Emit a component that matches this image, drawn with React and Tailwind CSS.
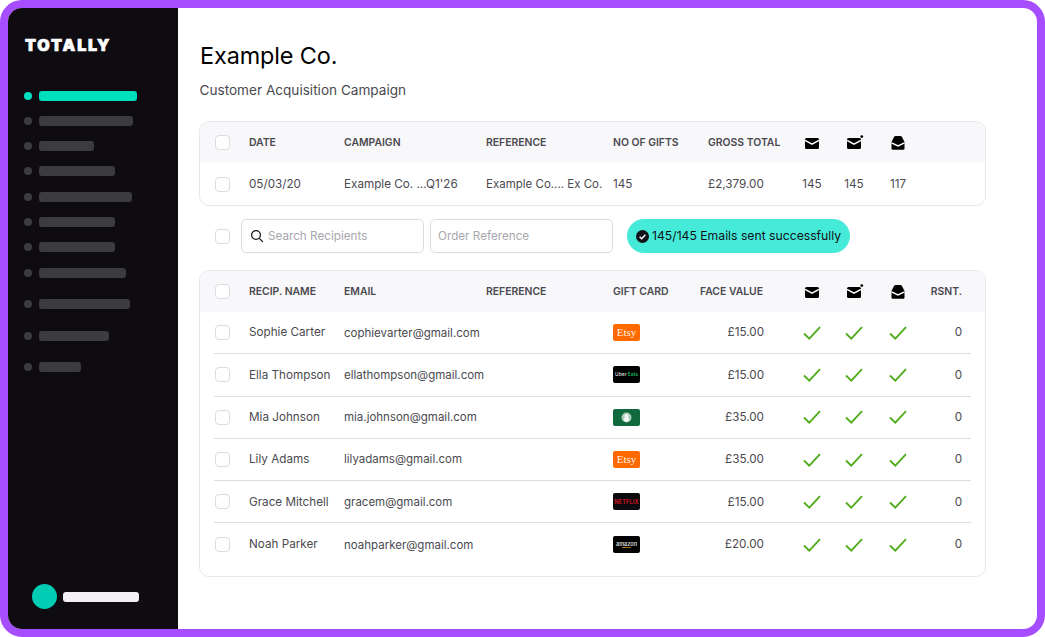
import React from "react";

const navBars = [
  { width: "w-[94px]", top: "mt-[15px]" },
  { width: "w-[55px]", top: "mt-[15px]" },
  { width: "w-[76px]", top: "mt-[15px]" },
  { width: "w-[93px]", top: "mt-[16px]" },
  { width: "w-[76px]", top: "mt-[15px]" },
  { width: "w-[76px]", top: "mt-[15px]" },
  { width: "w-[87px]", top: "mt-[16px]" },
  { width: "w-[91px]", top: "mt-[21px]" },
  { width: "w-[70px]", top: "mt-[22px]" },
  { width: "w-[42px]", top: "mt-[21px]" },
];

const recipients = [
  { name: "Sophie Carter", email: "cophievarter@gmail.com", card: "etsy", value: "£15.00" },
  { name: "Ella Thompson", email: "ellathompson@gmail.com", card: "uber", value: "£15.00" },
  { name: "Mia Johnson", email: "mia.johnson@gmail.com", card: "starbucks", value: "£35.00" },
  { name: "Lily Adams", email: "lilyadams@gmail.com", card: "etsy", value: "£35.00" },
  { name: "Grace Mitchell", email: "gracem@gmail.com", card: "netflix", value: "£15.00" },
  { name: "Noah Parker", email: "noahparker@gmail.com", card: "amazon", value: "£20.00" },
];

const topGrid = "grid grid-cols-[35px_95px_142px_127px_95px_83px_42px_42px_46px] items-center";
const bottomGrid = "grid grid-cols-[35px_95px_142px_127px_87px_64px_27px_42px_42px_46px_41px] items-center";
const headText = "text-[10.4px] font-semibold text-[#4a4a50] whitespace-nowrap";
const bodyText = "pt-[1px] text-[11.7px] text-[#4a4a50] whitespace-nowrap";
const emailText = "pt-[1px] text-[11.5px] text-[#4a4a50] whitespace-nowrap";

const Checkbox = () => (
  <div className="ml-[1px] h-[15px] w-[15px] rounded-[4px] border border-[#dcdbe0] bg-white" />
);

const MailIcon = ({ dot }) => (
  <svg width="16" height="14" viewBox="0 0 16 14" className="mx-auto block overflow-visible">
    <rect x="1" y="2" width="14" height="11" rx="1.5" fill="#000" />
    <path d="M1 4.4 L8 8.2 L15 4.4" fill="none" stroke="#fff" strokeWidth="1.5" />
    {dot && <circle cx="15.8" cy="0.6" r="1.4" fill="#000" />}
  </svg>
);

const OpenMailIcon = () => (
  <svg width="16" height="14" viewBox="0 0 16 14" className="mx-auto block overflow-visible">
    <path d="M1.5 6 L4 1 Q4.5 0 5.5 0 L10.5 0 Q11.5 0 12 1 L14.5 6 L14.5 12.5 Q14.5 13.7 13.3 13.7 L2.7 13.7 Q1.5 13.7 1.5 12.5 Z" fill="#000" />
    <path d="M1.5 6.8 L8 10 L14.5 6.8" fill="none" stroke="#fff" strokeWidth="1.5" />
  </svg>
);

const Tick = () => (
  <svg width="18" height="14" viewBox="0 0 18 14" className="mx-auto block">
    <path d="M1 7.5 L6.3 12.6 L17 1.2" fill="none" stroke="#52ad1e" strokeWidth="1.9" />
  </svg>
);

const GiftCard = ({ type }) => {
  if (type === "etsy") {
    return (
      <div className="flex h-[17px] w-[27px] items-center justify-center rounded-[2px] bg-[#ff6a00] font-['Liberation_Serif',serif] text-[11px] text-[#fff1e6]">
        Etsy
      </div>
    );
  }
  if (type === "uber") {
    return (
      <div className="flex h-[17px] w-[27px] items-center justify-center gap-[1px] rounded-[2px] bg-black text-[5px] font-medium">
        <span className="text-[#ddd]">Uber</span>
        <span className="text-[#06c167]">Eats</span>
      </div>
    );
  }
  if (type === "starbucks") {
    return (
      <div className="flex h-[17px] w-[27px] items-center justify-center rounded-[2px] bg-[#116a3e]">
        <svg width="11" height="11" viewBox="0 0 11 11">
          <circle cx="5.5" cy="5.5" r="5" fill="#a9cdb9" />
          <circle cx="5.5" cy="4" r="2" fill="#f4f8f5" />
          <path d="M2.5 8.5 L4 5 L7 5 L8.5 8.5 L5.5 10 Z" fill="#f4f8f5" />
        </svg>
      </div>
    );
  }
  if (type === "netflix") {
    return (
      <div className="flex h-[17px] w-[27px] items-center justify-center rounded-[2px] bg-[#0c0a0e] text-[5.5px] font-bold tracking-[0.2px] text-[#c8141e]">
        NETFLIX
      </div>
    );
  }
  return (
    <div className="flex h-[17px] w-[27px] flex-col items-center justify-center rounded-[2px] bg-black text-[5.5px] font-semibold leading-[5px] text-[#ddd]">
      amazon
      <div className="h-[1px] w-[9px] rounded-full bg-[#a9701c]" />
    </div>
  );
};

const Sidebar = () => (
  <div className="flex w-[170px] shrink-0 flex-col bg-[#0e0c11] pl-[16px]">
    <div className="ml-[1px] mt-[28px] h-[18px] font-['Inter',sans-serif] text-[16px] font-black leading-[18px] tracking-[1.9px] text-white [-webkit-text-stroke:0.7px_#fff]">
      TOTALLY
    </div>
    <div className="mt-[37px] flex items-center gap-[7px]">
      <div className="h-[8px] w-[8px] rounded-full bg-[#00e0c0]" />
      <div className="h-[10px] w-[98px] rounded-[3px] bg-[#00e0c0]" />
    </div>
    {navBars.map((bar, i) => (
      <div key={i} className={`flex items-center gap-[7px] ${bar.top}`}>
        <div className="h-[8px] w-[8px] rounded-full bg-[#3c3b40]" />
        <div className={`h-[10px] rounded-[3px] bg-[#3c3b40] ${bar.width}`} />
      </div>
    ))}
    <div className="mt-auto mb-[20px] ml-[8px] flex items-center gap-[6px]">
      <div className="h-[25px] w-[25px] rounded-full bg-[#00cdb4]" />
      <div className="h-[10px] w-[76px] rounded-[3px] bg-[#f3f0f4]" />
    </div>
  </div>
);

const App = () => {
  return (
    <div className="h-[637px] w-[1045px] overflow-hidden bg-white font-['Inter',sans-serif]">
      <div className="flex h-full w-full overflow-hidden rounded-[22px] border-[8px] border-[#a64dff] bg-white">
        <Sidebar />
        <div className="flex-1 pl-[21px] pt-[32px]">
          <h1 className="ml-[1px] h-[32px] text-[23.4px] font-normal leading-[32px] tracking-[-0.1px] text-black">Example Co.</h1>
          <p className="ml-[0.5px] mt-[8px] h-[20px] text-[13.6px] leading-[20px] text-[#4a4a50]">
            Customer Acquisition Campaign
          </p>

          <div className="mt-[21px] w-[787px] overflow-hidden rounded-[10px] border border-[#e8e7ea]">
            <div className={`${topGrid} h-[41px] bg-[#f8f7fa] pl-[14px]`}>
              <Checkbox />
              <div className={headText}>DATE</div>
              <div className={headText}>CAMPAIGN</div>
              <div className={headText}>REFERENCE</div>
              <div className={headText}>NO OF GIFTS</div>
              <div className={headText}>GROSS TOTAL</div>
              <MailIcon />
              <MailIcon dot />
              <OpenMailIcon />
            </div>
            <div className={`${topGrid} h-[42px] pl-[14px]`}>
              <Checkbox />
              <div className={bodyText}>05/03/20</div>
              <div className={bodyText}>Example Co. ...Q1'26</div>
              <div className={emailText}>Example Co.... Ex Co.</div>
              <div className={bodyText}>145</div>
              <div className={bodyText}>£2,379.00</div>
              <div className={`${bodyText} text-center`}>145</div>
              <div className={`${bodyText} text-center`}>145</div>
              <div className={`${bodyText} text-center`}>117</div>
            </div>
          </div>

          <div className="mt-[13px] flex h-[34px] items-center pl-[15px]">
            <Checkbox />
            <div className="ml-[11px] flex h-[34px] w-[183px] items-center gap-[4px] rounded-[5px] border border-[#dcdbe0] pl-[8px] text-[11.7px] text-[#a8a7ad]">
              <svg width="14" height="14" viewBox="0 0 14 14" fill="none" stroke="#111" strokeWidth="1.2">
                <circle cx="6" cy="6" r="4.4" />
                <path d="M9.3 9.3 L12.8 12.8" />
              </svg>
              <span className="pt-[1px]">Search Recipients</span>
            </div>
            <div className="ml-[6px] flex h-[34px] w-[183px] items-center rounded-[5px] border border-[#dcdbe0] pl-[7px] pt-[1px] text-[11.7px] text-[#a8a7ad]">
              Order Reference
            </div>
            <div className="ml-[14px] flex h-[34px] w-[223px] items-center gap-[3px] rounded-full bg-[#45ebd8] pl-[9px] text-[12.2px] text-[#12121a]">
              <svg width="13" height="13" viewBox="0 0 13 13">
                <circle cx="6.5" cy="6.5" r="6.5" fill="#12121a" />
                <path d="M3.6 6.7 L5.7 8.7 L9.4 4.7" fill="none" stroke="#fff" strokeWidth="1.4" />
              </svg>
              <span className="whitespace-nowrap">145/145 Emails sent successfully</span>
            </div>
          </div>

          <div className="mt-[17px] w-[787px] overflow-hidden rounded-[10px] border border-[#e8e7ea] pb-[10px]">
            <div className={`${bottomGrid} h-[41px] bg-[#f8f7fa] pl-[14px]`}>
              <Checkbox />
              <div className={headText}>RECIP. NAME</div>
              <div className={headText}>EMAIL</div>
              <div className={headText}>REFERENCE</div>
              <div className={headText}>GIFT CARD</div>
              <div className={`${headText} pr-[1px] text-right`}>FACE VALUE</div>
              <div />
              <MailIcon />
              <MailIcon dot />
              <OpenMailIcon />
              <div className={`${headText} text-right`}>RSNT.</div>
            </div>
            <div className="px-[14px]">
              {recipients.map((r, i) => (
                <div
                  key={r.name}
                  className={`${bottomGrid} h-[42.3px] ${i < recipients.length - 1 ? "border-b border-[#dedde1]" : ""}`}
                >
                  <Checkbox />
                  <div className={bodyText}>{r.name}</div>
                  <div className={emailText}>{r.email}</div>
                  <div />
                  <GiftCard type={r.card} />
                  <div className={`${bodyText} text-right`}>{r.value}</div>
                  <div />
                  <Tick />
                  <Tick />
                  <Tick />
                  <div className={`${bodyText} text-right`}>0</div>
                </div>
              ))}
            </div>
          </div>
        </div>
      </div>
    </div>
  );
};

export default App;
